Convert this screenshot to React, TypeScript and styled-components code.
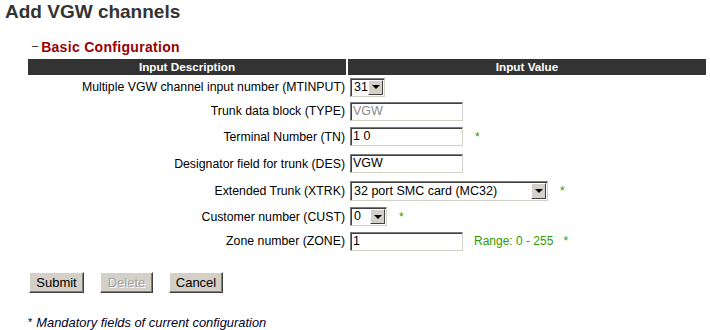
import styled, { createGlobalStyle } from 'styled-components'

const GlobalStyle = createGlobalStyle`
  body {
    margin: 0;
    background: #ffffff;
    font-family: "Liberation Sans", Arial, sans-serif;
  }
`

const Page = styled.div`
  width: 710px;
  height: 330px;
  overflow: hidden;
`

const Title = styled.h1`
  margin: 0;
  padding: 0 0 0 5px;
  height: 24px;
  font-size: 19px;
  line-height: 24px;
  font-weight: bold;
  color: #333333;
`

const Section = styled.div`
  padding-left: 28px;
`

const SectionTitle = styled.div`
  display: flex;
  align-items: center;
  gap: 3px;
  margin-top: 12px;
  height: 23px;
  padding-left: 4px;
  font-size: 14px;
  line-height: 23px;
`

const Dash = styled.span`
  color: #000000;
  font-size: 11px;
  line-height: 15px;
  padding-bottom: 4px;
`

const SectionName = styled.span`
  color: #990000;
  font-weight: bold;
  letter-spacing: 0.3px;
`

const HeaderRow = styled.div`
  display: grid;
  grid-template-columns: 318px 358px;
  column-gap: 2px;
  height: 16px;
`

const HeaderCell = styled.div`
  background: #333333;
  color: #ffffff;
  font-size: 11.7px;
  font-weight: bold;
  line-height: 16px;
  text-align: center;
`

const Row = styled.div<{ $h: number }>`
  display: grid;
  grid-template-columns: 318px 358px;
  column-gap: 2px;
  height: ${(p) => p.$h}px;
  align-items: center;
`

const Label = styled.div`
  text-align: right;
  font-size: 12.3px;
  color: #000000;
  padding-right: 1px;
`

const Value = styled.div`
  display: flex;
  align-items: center;
  padding-left: 2px;
`

const TextBox = styled.div<{ $disabled?: boolean }>`
  box-sizing: border-box;
  width: 113px;
  height: 19px;
  border: 1px solid;
  border-color: #7b7b7b #d4d0c8 #d4d0c8 #7b7b7b;
  box-shadow: inset 1px 1px 0 #404040;
  padding: 0 2px;
  font-size: 12.5px;
  line-height: 17px;
  color: ${(p) => (p.$disabled ? '#8a8a8a' : '#000000')};
  background: #ffffff;
  white-space: nowrap;
`

const SelectBox = styled.div<{ $w: number; $h: number }>`
  box-sizing: border-box;
  display: flex;
  align-items: stretch;
  width: ${(p) => p.$w}px;
  height: ${(p) => p.$h}px;
  border: 1px solid;
  border-color: #7b7b7b #d4d0c8 #d4d0c8 #7b7b7b;
  box-shadow: inset 1px 1px 0 #404040;
  padding: 1px;
  background: #ffffff;
`

const SelectText = styled.div`
  flex: 1;
  padding-left: 2px;
  font-size: 12.5px;
  line-height: 15px;
  color: #000000;
  white-space: nowrap;
  overflow: hidden;
  align-self: center;
`

const ArrowButton = styled.div`
  box-sizing: border-box;
  flex: 0 0 15px;
  background: #d4d0c8;
  border: 1px solid;
  border-color: #ffffff #404040 #404040 #ffffff;
  display: flex;
  align-items: center;
  justify-content: center;
`

const Arrow = styled.div`
  width: 0;
  height: 0;
  border-left: 4px solid transparent;
  border-right: 4px solid transparent;
  border-top: 4px solid #000000;
`

const Note = styled.span<{ $gap: number }>`
  margin-left: ${(p) => p.$gap}px;
  color: #339900;
  font-size: 12px;
`

const Buttons = styled.div`
  display: flex;
  gap: 16px;
  margin-top: 18px;
  padding-left: 1px;
`

const Button = styled.button<{ $w: number }>`
  box-sizing: border-box;
  width: ${(p) => p.$w}px;
  height: 21px;
  padding: 0;
  background: #d4d0c8;
  border: 1px solid;
  border-color: #ffffff #404040 #404040 #ffffff;
  box-shadow: inset -1px -1px 0 #808080;
  font-family: "Liberation Sans", Arial, sans-serif;
  font-size: 13px;
  color: #000000;

  &:disabled {
    color: #a0a0a0;
    text-shadow: 1px 1px 0 #ffffff;
  }
`

const Footer = styled.div`
  display: flex;
  gap: 4px;
  margin-top: 22px;
  font-size: 12.9px;
  line-height: 15px;
`

const Star = styled.span`
  color: #000000;
  font-size: 11px;
`

const FooterText = styled.span`
  font-style: italic;
  color: #000022;
`

const Select = ({ value, w, h }: { value: string; w: number; h: number }) => (
  <SelectBox $w={w} $h={h}>
    <SelectText>{value}</SelectText>
    <ArrowButton>
      <Arrow />
    </ArrowButton>
  </SelectBox>
)

export default function App() {
  return (
    <Page>
      <GlobalStyle />
      <Title>Add VGW channels</Title>
      <Section>
        <SectionTitle>
          <Dash>–</Dash>
          <SectionName>Basic Configuration</SectionName>
        </SectionTitle>
        <HeaderRow>
          <HeaderCell>Input Description</HeaderCell>
          <HeaderCell>Input Value</HeaderCell>
        </HeaderRow>

        <Row $h={24}>
          <Label>Multiple VGW channel input number (MTINPUT)</Label>
          <Value>
            <Select value="31" w={35} h={19} />
          </Value>
        </Row>
        <Row $h={24}>
          <Label>Trunk data block (TYPE)</Label>
          <Value>
            <TextBox $disabled>VGW</TextBox>
          </Value>
        </Row>
        <Row $h={27}>
          <Label>Terminal Number (TN)</Label>
          <Value>
            <TextBox>1 0</TextBox>
            <Note $gap={12}>*</Note>
          </Value>
        </Row>
        <Row $h={27}>
          <Label>Designator field for trunk (DES)</Label>
          <Value>
            <TextBox>VGW</TextBox>
          </Value>
        </Row>
        <Row $h={28}>
          <Label>Extended Trunk (XTRK)</Label>
          <Value>
            <Select value="32 port SMC card (MC32)" w={198} h={20} />
            <Note $gap={12}>*</Note>
          </Value>
        </Row>
        <Row $h={23}>
          <Label>Customer number (CUST)</Label>
          <Value>
            <Select value="0" w={37} h={19} />
            <Note $gap={12}>*</Note>
          </Value>
        </Row>
        <Row $h={26}>
          <Label>Zone number (ZONE)</Label>
          <Value>
            <TextBox>1</TextBox>
            <Note $gap={11}>Range: 0 - 255 &nbsp;&nbsp;*</Note>
          </Value>
        </Row>

        <Buttons>
          <Button $w={55}>Submit</Button>
          <Button $w={53} disabled>
            Delete
          </Button>
          <Button $w={54}>Cancel</Button>
        </Buttons>

        <Footer>
          <Star>*</Star>
          <FooterText>Mandatory fields of current configuration</FooterText>
        </Footer>
      </Section>
    </Page>
  )
}
